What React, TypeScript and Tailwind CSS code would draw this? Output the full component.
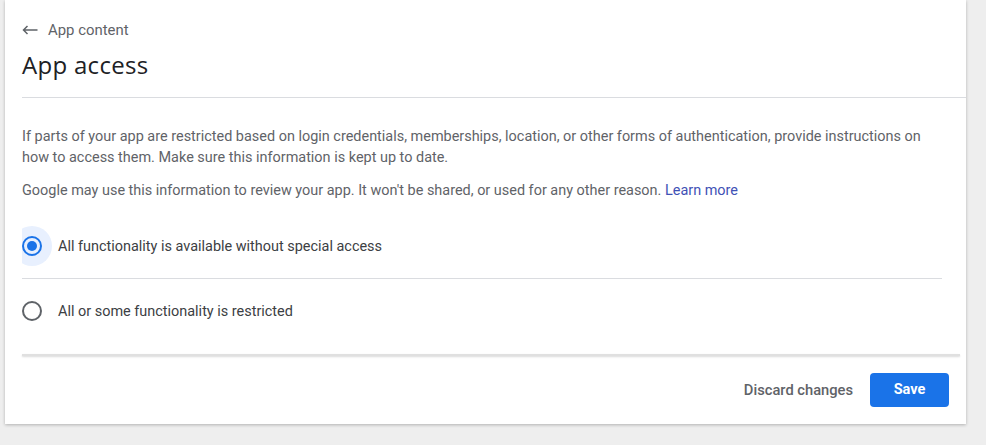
import React from "react";

export default function App() {
  return (
    <div className="min-h-[445px] w-[986px] bg-[#eeeeee] font-['Roboto',sans-serif] overflow-hidden">
      <div className="ml-[5px] w-[961px] h-[424px] bg-white shadow-[0_1px_3px_rgba(0,0,0,0.25)] flex flex-col">
        {/* Header */}
        <div className="ml-[17px] pt-[20px] pb-[18px] border-b border-[#dadce0]">
          <div className="flex items-center h-[20px] text-[14.9px] text-[#5f6368]">
            <svg width="16" height="10" viewBox="0 0 16 10" className="mr-[10px]" fill="none">
              <path d="M15.5 5H1.5M5.5 1L1.5 5l4 4" stroke="#5f6368" strokeWidth="1.5" />
            </svg>
            <span>App content</span>
          </div>
          <h1 className="mt-[11px] text-[24px] leading-[28px] tracking-[0.3px] text-[#202124] font-['Open_Sans',sans-serif]">
            App access
          </h1>
        </div>

        {/* Body */}
        <div className="ml-[17px] w-[920px] pt-[28px] text-[14.45px] leading-[21px] text-[#5f6368]">
          <p>
            If parts of your app are restricted based on login credentials, memberships, location, or other forms of
            authentication, provide instructions on how to access them. Make sure this information is kept up to date.
          </p>
          <p className="mt-[12px]">
            Google may use this information to review your app. It won&apos;t be shared, or used for any other reason.{" "}
            <span className="text-[#3f51b5]">Learn more</span>
          </p>

          <div className="mt-[25px]">
            <div className="flex items-center pb-[12px] border-b border-[#dadce0]">
              <div className="w-[30px] h-[40px] overflow-hidden relative">
                <div className="absolute left-[-10px] top-0 w-[40px] h-[40px] rounded-full bg-[#e8f0fe] flex items-center justify-center">
                  <div className="w-[20px] h-[20px] rounded-full border-2 border-[#1a73e8] flex items-center justify-center">
                    <div className="w-[10px] h-[10px] rounded-full bg-[#1a73e8]" />
                  </div>
                </div>
              </div>
              <span className="ml-[6px] text-[#3c4043]">All functionality is available without special access</span>
            </div>
            <div className="flex items-center pt-[12px]">
              <div className="w-[30px] h-[40px] flex items-center">
                <div className="w-[20px] h-[20px] rounded-full border-2 border-[#5f6368]" />
              </div>
              <span className="ml-[6px] text-[#3c4043]">All or some functionality is restricted</span>
            </div>
          </div>
        </div>

        <div className="flex-1" />

        {/* Footer */}
        <div className="ml-[17px] mr-[6px] h-[2px] bg-[#e0e0e0] shadow-[0_1px_2px_rgba(0,0,0,0.15)]" />
        <div className="flex items-center justify-end pt-[17px] pb-[17px] pr-[17px]">
          <button className="text-[14.7px] font-medium text-[#5f6368] mr-[17px]">Discard changes</button>
          <button className="w-[79px] h-[34px] rounded-[4px] bg-[#1a73e8] text-white text-[14.5px] font-bold">
            Save
          </button>
        </div>
      </div>
    </div>
  );
}
